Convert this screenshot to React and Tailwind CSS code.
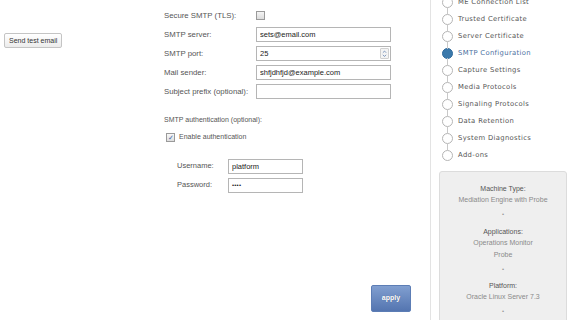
import { ChevronUp, ChevronDown } from 'lucide-react';

const steps = [
  { label: 'ME Connection List' },
  { label: 'Trusted Certificate' },
  { label: 'Server Certificate' },
  { label: 'SMTP Configuration', active: true },
  { label: 'Capture Settings' },
  { label: 'Media Protocols' },
  { label: 'Signaling Protocols' },
  { label: 'Data Retention' },
  { label: 'System Diagnostics' },
  { label: 'Add-ons' },
];

const inputCls =
  'h-[15px] w-[135px] border border-[#b5b5b5] bg-white px-[3px] text-[7.5px] leading-[13px] text-[#222] outline-none';

const FormRow = ({ label, children }) => (
  <div className="flex h-[19px] items-center">
    <span className="w-[92px] text-[7.8px] text-[#555]">{label}</span>
    {children}
  </div>
);

const InfoBlock = ({ title, values }) => (
  <div className="flex flex-col items-center">
    <div className="text-[7px] leading-[11px] text-[#555]">{title}</div>
    {values.map((v, i) => (
      <div key={v} className={`text-[7px] leading-[11px] text-[#8a8a8a] ${i > 0 ? 'mt-[1px]' : ''}`}>
        {v}
      </div>
    ))}
  </div>
);

const Dot = () => <div className="mt-[6px] mb-[7.5px] text-[6px] leading-[7px] text-[#999]">•</div>;

export default function App() {
  return (
    <div
      className="flex h-[320px] w-[570px] overflow-hidden bg-white"
      style={{ fontFamily: '"Liberation Sans", Arial, sans-serif' }}
    >
      {/* Left column */}
      <div className="w-[164px] shrink-0 pl-[4px] pt-[26px]">
        <button className="h-[15px] rounded-[2px] border border-[#c4c4c4] bg-gradient-to-b from-white to-[#ececec] px-[4px] text-[7px] leading-[13px] text-[#333]">
          Send test email
        </button>
      </div>

      {/* Form */}
      <div className="relative flex w-[266px] shrink-0 flex-col pt-[6px]">
        <FormRow label="Secure SMTP (TLS):">
          <span className="h-[9px] w-[9px] border border-[#9a9a9a] bg-gradient-to-b from-[#f4f4f4] to-[#dcdcdc]" />
        </FormRow>
        <FormRow label="SMTP server:">
          <input className={inputCls} defaultValue="sets@email.com" />
        </FormRow>
        <FormRow label="SMTP port:">
          <div className="flex h-[15px] w-[135px] items-center border border-[#b5b5b5] bg-white pl-[3px] text-[7.5px] text-[#222]">
            <span className="flex-1">25</span>
            <div className="mr-[1px] flex h-[11px] w-[9px] flex-col items-center justify-center rounded-[1px] border border-[#d0d0d0] bg-[#f4f4f4] text-[#4a6fa5]">
              <ChevronUp size={7} strokeWidth={3} className="-mb-[2px]" />
              <ChevronDown size={7} strokeWidth={3} />
            </div>
          </div>
        </FormRow>
        <FormRow label="Mail sender:">
          <input className={inputCls} defaultValue="shfjdhfjd@example.com" />
        </FormRow>
        <FormRow label="Subject prefix (optional):">
          <input className={inputCls} defaultValue="" />
        </FormRow>

        <div className="mt-[14px] text-[7px] leading-[10px] text-[#555]">SMTP authentication (optional):</div>
        <div className="mt-[7px] flex items-center pl-[2px]">
          <span className="flex h-[9px] w-[9px] items-center justify-center border border-[#9a9a9a] bg-gradient-to-b from-[#f8f8f8] to-[#dedede] text-[7px] leading-none text-[#3a66a8]">
            ✓
          </span>
          <span className="ml-[4px] text-[7px] text-[#555]">Enable authentication</span>
        </div>

        <div className="mt-[14px] flex flex-col pl-[13px]">
          <div className="flex h-[19px] items-center">
            <span className="w-[51px] text-[7.5px] text-[#555]">Username:</span>
            <input
              className="h-[15px] w-[75px] border border-[#b5b5b5] bg-white px-[3px] text-[7.5px] text-[#222] outline-none"
              defaultValue="platform"
            />
          </div>
          <div className="flex h-[19px] items-center">
            <span className="w-[51px] text-[7.5px] text-[#555]">Password:</span>
            <div className="flex h-[15px] w-[75px] items-center border border-[#b5b5b5] bg-white px-[3px] text-[6px] tracking-[0.2px] text-[#222]">
              ••••
            </div>
          </div>
        </div>

        <div className="mt-auto mb-[8px] flex justify-end pr-[19px]">
          <button className="h-[27px] w-[40px] rounded-[2px] border border-[#5c7db5] bg-gradient-to-b from-[#819fd0] to-[#5475b0] text-[7px] font-bold text-white [text-shadow:0_0_1px_rgba(0,0,0,0.3)]">
            apply
          </button>
        </div>
      </div>

      {/* Sidebar */}
      <div className="flex flex-1 border-l border-[#e3e3e3] pl-[8px]">
        <div className="flex flex-1 flex-col">
          <div className="-mt-[6px] flex flex-col" style={{ fontFamily: '"DejaVu Sans", Verdana, sans-serif' }}>
            {steps.map((s, i) => (
              <div key={s.label} className="relative flex h-[17px] items-center">
                {i > 0 && <span className="absolute left-[8px] top-0 h-[4px] w-px bg-[#c8c8c8]" />}
                {i < steps.length - 1 && <span className="absolute bottom-0 left-[8px] h-[4px] w-px bg-[#c8c8c8]" />}
                <span
                  className={`ml-[3px] h-[11px] w-[11px] shrink-0 rounded-full border ${
                    s.active ? 'border-[#2f6a9c] bg-[#3b79ab]' : 'border-[#b5b5b5] bg-white'
                  }`}
                />
                <span
                  className={`ml-[5px] text-[6.8px] tracking-[0.35px] ${
                    s.active ? 'text-[#4b6fa0]' : 'text-[#555]'
                  }`}
                >
                  {s.label}
                </span>
              </div>
            ))}
          </div>

          <div className="mt-[7px] mr-[3px] flex flex-1 flex-col items-center rounded-[3px] border border-[#dcdcdc] bg-[#efefef] pt-[11px]">
            <InfoBlock title="Machine Type:" values={['Mediation Engine with Probe']} />
            <Dot />
            <InfoBlock title="Applications:" values={['Operations Monitor', 'Probe']} />
            <Dot />
            <InfoBlock title="Platform:" values={['Oracle Linux Server 7.3']} />
            <Dot />
          </div>
        </div>
      </div>
    </div>
  );
}
